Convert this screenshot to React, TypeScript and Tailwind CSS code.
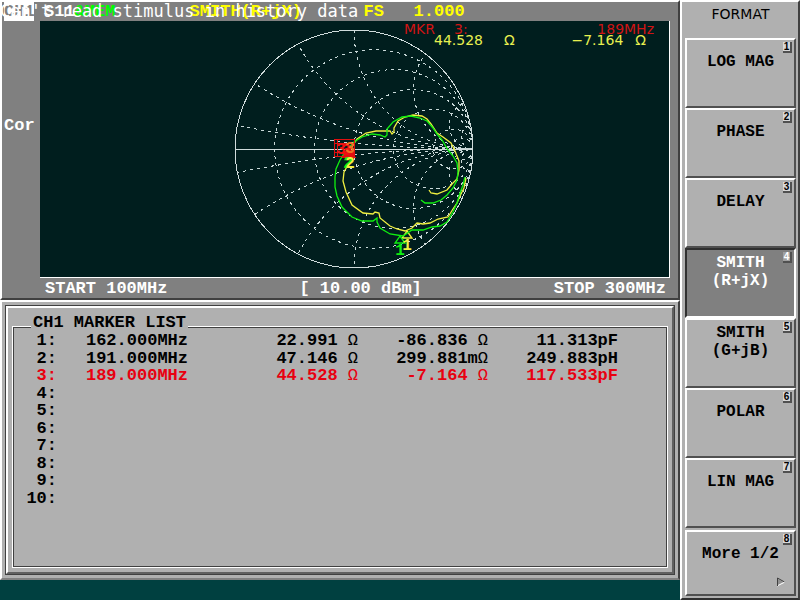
import { clsx } from "clsx";

type Marker = {
  id: number;
  freq?: string;
  real?: string;
  imag?: string;
  imagPrefix?: string;
  part?: string;
};

const markers: Marker[] = [
  { id: 1, freq: "162.000MHz", real: "22.991", imag: "-86.836", part: "11.313pF" },
  { id: 2, freq: "191.000MHz", real: "47.146", imag: "299.881", imagPrefix: "m", part: "249.883pH" },
  { id: 3, freq: "189.000MHz", real: "44.528", imag: "-7.164", part: "117.533pF" },
  { id: 4 },
  { id: 5 },
  { id: 6 },
  { id: 7 },
  { id: 8 },
  { id: 9 },
  { id: 10 },
];

const ACTIVE_MARKER = 3;

const formats = [
  ["LOG MAG"],
  ["PHASE"],
  ["DELAY"],
  ["SMITH", "(R+jX)"],
  ["SMITH", "(G+jB)"],
  ["POLAR"],
  ["LIN MAG"],
];

const ACTIVE_FORMAT = 3;

// chart geometry
const CX = 354;
const CY = 149;
const R = 119;
const resistances = [0.2, 0.5, 1, 2, 5, 10];
const reactances = [0.1, 0.3, 0.6, 1, 2, 5, 10];

const greenUpper =
  "346,151 354,142 362,137 372,134 380,135 385,137 387,135 387,129 393,122 402,117 411,116 420,118 427,121 433,128 437,134 442,140 448,150 453,156 457,163 458,172 457,180 453,188 447,195 441,200 433,203 425,203 421,200";
const greenLower =
  "345,152 340,160 336,169 335,177 335,187 337,196 342,207 352,217 362,221 373,221 377,218 377,222 380,228 390,234 403,236 412,230 423,230 432,227 440,226 447,222 453,212 457,203 460,193 463,185 465,177";
const yellowUpper =
  "350,150 357,139 366,133 376,131 386,131 390,131 392,134 394,132 394,128 398,121 405,117 413,115 422,116 427,119 431,124 437,133 443,137 451,143 455,151 459,161 459,170 457,179 452,184 447,190 437,194 431,193 429,190";
const yellowLower =
  "348,165 344,172 343,181 346,192 352,205 363,213 373,214 375,212 379,213 380,218 390,226 397,229 405,231 412,228 417,223 423,224 430,223 438,219 448,217 453,209 457,203 460,196 464,188 466,178";

function SmithChart() {
  return (
    <svg
      viewBox="40 21 629 256"
      className="block w-full"
      fill="none"
      shapeRendering="crispEdges"
      role="img"
      aria-label="Smith chart"
    >
      <clipPath id="disc">
        <circle cx={CX} cy={CY} r={R} />
      </clipPath>
      <g clipPath="url(#disc)" stroke="#c8d8d8" strokeDasharray="3 4">
        {resistances.map((r) => (
          <circle key={r} cx={CX + (R * r) / (r + 1)} cy={CY} r={R / (r + 1)} />
        ))}
        {reactances.map((x) => (
          <g key={x}>
            <circle cx={CX + R} cy={CY - R / x} r={R / x} />
            <circle cx={CX + R} cy={CY + R / x} r={R / x} />
          </g>
        ))}
      </g>
      <circle cx={CX} cy={CY} r={R} stroke="#d0dcdc" />
      <path d={`M${CX - R} ${CY + 0.5}h${2 * R}`} stroke="#d0dcdc" />
      <g stroke="#f0f040" strokeWidth="1.3" shapeRendering="auto">
        <polyline points={yellowUpper} />
        <polyline points={yellowLower} />
        <path d="M407 231l5 7h-10z" />
      </g>
      <g stroke="#10f010" strokeWidth="1.3" shapeRendering="auto">
        <polyline points={greenUpper} />
        <polyline points={greenLower} />
        <path d="M400 236l5 7h-10z" />
        <path d="M348 150l5 7h-10z" />
      </g>
      <g stroke="#e01010">
        <path d="M334 139h20v17h-20zM334 143h20M334 152h20M337 139v17" />
        <path d="M349 146l6 11h-12z" fill="#e01010" />
      </g>
      <g
        className="font-['Liberation_Mono'] font-bold"
        fontSize="16"
        textAnchor="middle"
      >
        <text x="400" y="255" fill="#10f010">1</text>
        <text x="407" y="250" fill="#f0f040">1</text>
        <text x="348" y="168" fill="#10f010">2</text>
        <text x="350" y="168" fill="#f0f040">2</text>
        <text x="341" y="154" fill="#f01010">3</text>
        <text x="346" y="155" fill="#f01010">3</text>
        <text x="350" y="153" fill="#f07020">3</text>
      </g>
    </svg>
  );
}

function MarkerReadout() {
  return (
    <div className="absolute top-[3px] right-[15px] w-[250px] font-['DejaVu_Sans',sans-serif] text-[14px] leading-[11px] font-normal">
      <div className="flex text-[#d01414]">
        <span className="w-[50px]">MKR</span>
        <span>3:</span>
        <span className="ml-auto">189MHz</span>
      </div>
      <div className="flex pr-2 text-[#e8f050]">
        <span className="ml-[30px] w-[70px]">44.528</span>
        <span>Ω</span>
        <span className="mr-3 ml-auto">−7.164</span>
        <span>Ω</span>
      </div>
    </div>
  );
}

function ChannelPanel() {
  return (
    <section className="border-2 border-t-white border-r-[#404040] border-b-[#404040] border-l-white bg-[#808080] text-[17px] leading-[19px] font-bold text-white">
      <header className="relative flex h-[19px] pl-0.5 whitespace-pre">
        <span className="mr-2.5 w-[30px] bg-white text-[#808080]">CH1</span>
        <span>S11</span>
        <span className="w-[115px] text-[#00ff00]">&amp;MEM</span>
        <span className="w-[174px] text-[#ffff00]">SMITH(R+jX)</span>
        <span className="w-[50px] text-[#ffff00]">FS</span>
        <span className="text-[#ffff00]">1.000</span>
        <p className="absolute top-0 -left-0.5 font-['DejaVu_Sans_Mono',monospace] font-normal">
          Can't read stimulus in history data
        </p>
      </header>
      <div className="flex">
        <aside className="w-[38px] shrink-0 pt-[95px] pl-0.5">Cor</aside>
        <div className="mr-2 min-w-0 flex-1">
          <div className="relative border-r border-b border-white bg-[#001e1e]">
            <SmithChart />
            <MarkerReadout />
          </div>
          <div className="flex justify-between pt-px pr-1 pl-[5px]">
            <span>START 100MHz</span>
            <span>[ 10.00 dBm]</span>
            <span>STOP 300MHz</span>
          </div>
        </div>
      </div>
    </section>
  );
}

function Ohm() {
  return <span className="font-normal">Ω</span>;
}

function MarkerList() {
  return (
    <section className="flex flex-1 flex-col border-2 border-t-white border-r-[#404040] border-b-[#808080] border-l-white bg-[#b0b0b0] p-[3px]">
      <div className="flex flex-1 flex-col border border-[#404040]">
        <div className="flex flex-1 flex-col border-2 border-white border-r-[#606060] border-b-[#606060] px-1 pt-1.5 pb-1">
          <fieldset className="min-w-0 flex-1 border border-white text-[17px] leading-[17px] font-bold text-black shadow-[inset_1px_1px_0_#404040,inset_-1px_-1px_0_#404040]">
            <legend className="ml-[18px] bg-[#b0b0b0] px-0.5 pb-1.5 leading-[18px]">
              CH1 MARKER LIST
            </legend>
            <table className="-mt-1.5 h-[175px] w-full table-fixed border-collapse text-right">
              <colgroup>
                <col className="w-11" />
                <col className="w-[131px]" />
                <col className="w-[170px]" />
                <col className="w-[130px]" />
                <col className="w-[130px]" />
                <col />
              </colgroup>
              <tbody>
                {markers.map((m) => (
                  <tr
                    key={m.id}
                    className={clsx(m.id === ACTIVE_MARKER && "text-[#e80010]")}
                  >
                    <th scope="row" className="p-0">
                      {m.id}:
                    </th>
                    <td className="p-0">{m.freq}</td>
                    <td className="p-0">
                      {m.real && (
                        <>
                          {m.real} <Ohm />
                        </>
                      )}
                    </td>
                    <td className="p-0">
                      {m.imag && (
                        <>
                          {m.imag}
                          {m.imagPrefix ?? " "}
                          <Ohm />
                        </>
                      )}
                    </td>
                    <td className="p-0">{m.part}</td>
                    <td className="p-0" />
                  </tr>
                ))}
              </tbody>
            </table>
          </fieldset>
        </div>
      </div>
    </section>
  );
}

function SoftKey({
  index,
  lines,
  active,
  more,
}: {
  index: number;
  lines: string[];
  active?: boolean;
  more?: boolean;
}) {
  return (
    <button
      type="button"
      className={clsx(
        "relative flex w-full flex-col border-2 pt-1 text-[16px] leading-[18px] font-bold",
        more ? "h-[66px]" : "h-[70px]",
        active
          ? "border-t-[#303030] border-r-white border-b-white border-l-[#303030] bg-[#808080] text-white"
          : "border-t-white border-r-[#505050] border-b-[#505050] border-l-white text-black",
      )}
    >
      <span className="flex h-9 w-full flex-col items-center justify-center">
        {lines.map((line) => (
          <span key={line}>{line}</span>
        ))}
      </span>
      <span
        className={clsx(
          "absolute top-0.5 right-0.5 h-[11px] w-[9px] border-r-2 border-b-2 border-[#505050] text-center font-['Liberation_Sans',sans-serif] text-[10px] leading-[10px]",
          active ? "bg-[#a0a0a0] text-white" : "bg-[#d8d8d8] text-black",
        )}
      >
        {index}
      </span>
      {more && (
        <svg
          viewBox="0 0 10 10"
          className="absolute right-2 bottom-[7px] size-2.5"
          fill="none"
        >
          <path d="M2 2v6l5-3z" fill="#909090" />
          <path d="M1 9l8-4" stroke="#ffffff" />
          <path d="M1.5 9V1l7 4" stroke="#404040" />
        </svg>
      )}
    </button>
  );
}

function FormatMenu() {
  return (
    <nav className="flex w-[120px] shrink-0 flex-col border-2 border-t-white border-r-[#404040] border-b-[#303030] border-l-white bg-[#b0b0b0] pr-0.5 pl-[3px]">
      <h2 className="py-1 text-center font-['DejaVu_Sans',sans-serif] text-[14px] leading-[16px] text-black">
        FORMAT
      </h2>
      <div className="mt-3">
        {formats.map((lines, i) => (
          <SoftKey
            key={lines.join("")}
            index={i + 1}
            lines={lines}
            active={i === ACTIVE_FORMAT}
          />
        ))}
      </div>
      <div className="mt-0.5">
        <SoftKey index={8} lines={["More 1/2"]} more />
      </div>
    </nav>
  );
}

export default function App() {
  return (
    <main className="flex min-h-screen bg-[#004040] font-['Liberation_Mono',monospace]">
      <div className="flex min-w-0 flex-1 flex-col pb-5">
        <ChannelPanel />
        <MarkerList />
      </div>
      <FormatMenu />
    </main>
  );
}
